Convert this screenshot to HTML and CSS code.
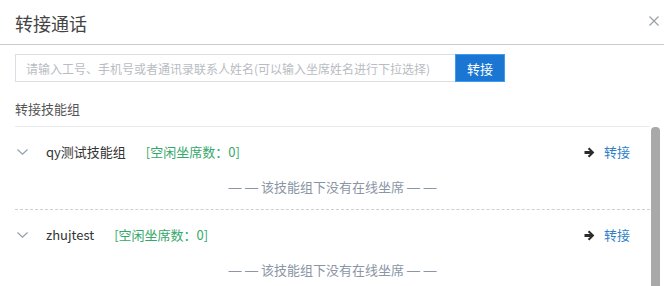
FILE: index.html
```html
<!DOCTYPE html>
<html lang="zh-CN">
<head>
<meta charset="utf-8">
<title>转接通话</title>
<link rel="stylesheet" href="styles.css">
</head>
<body>
<div class="modal">
  <div class="modal-header">
    <span class="modal-title">转接通话</span>
    <svg class="close" width="10" height="10" viewBox="0 0 10 10"><path d="M0.5 0.5L9.5 9.5M9.5 0.5L0.5 9.5" stroke="#9aa0a8" stroke-width="1.2" fill="none"/></svg>
  </div>
  <div class="modal-body">
    <div class="search-row">
      <input class="search-input" type="text" placeholder="请输入工号、手机号或者通讯录联系人姓名(可以输入坐席姓名进行下拉选择)">
      <button class="btn-primary">转接</button>
    </div>
    <div class="section-label">转接技能组</div>
    <div class="list-wrap">
      <div class="group-list">
        <div class="group">
          <div class="group-row">
            <svg class="chevron" width="11" height="6" viewBox="0 0 11 6"><path d="M0.5 0.5L5.5 5.2L10.5 0.5" stroke="#8e9db1" stroke-width="1.1" fill="none"/></svg>
            <span class="group-name">qy测试技能组</span>
            <span class="idle">[空闲坐席数：0]</span>
            <span class="spacer"></span>
            <svg class="arrow" width="11" height="11" viewBox="0 0 11 11"><path d="M0.5 4.1H6L3.8 1.9L5.3 0.4L10.4 5.5L5.3 10.6L3.8 9.1L6 6.9H0.5Z" fill="#2b2b2b"/></svg>
            <a class="transfer-link">转接</a>
          </div>
          <div class="empty"><span class="dash">— —</span> 该技能组下没有在线坐席 <span class="dash">— —</span></div>
        </div>
        <div class="group">
          <div class="group-row">
            <svg class="chevron" width="11" height="6" viewBox="0 0 11 6"><path d="M0.5 0.5L5.5 5.2L10.5 0.5" stroke="#8e9db1" stroke-width="1.1" fill="none"/></svg>
            <span class="group-name">zhujtest</span>
            <span class="idle">[空闲坐席数：0]</span>
            <span class="spacer"></span>
            <svg class="arrow" width="11" height="11" viewBox="0 0 11 11"><path d="M0.5 4.1H6L3.8 1.9L5.3 0.4L10.4 5.5L5.3 10.6L3.8 9.1L6 6.9H0.5Z" fill="#2b2b2b"/></svg>
            <a class="transfer-link">转接</a>
          </div>
          <div class="empty"><span class="dash">— —</span> 该技能组下没有在线坐席 <span class="dash">— —</span></div>
        </div>
      </div>
      <div class="scroll-rail"><div class="scroll-thumb"></div></div>
    </div>
  </div>
</div>
</body>
</html>
```
FILE: styles.css
```css
html, body {
  margin: 0;
  padding: 0;
  height: 286px;
  overflow: hidden;
  background: #fff;
}
body {
  font-family: "Noto Sans CJK SC", "Noto Sans", sans-serif;
  font-size: 13px;
  color: #333;
}
.modal-header {
  height: 44px;
  border-bottom: 1px solid #cccccc;
  display: flex;
  align-items: center;
  padding: 0 5px 0 15px;
}
.modal-title {
  font-size: 18px;
  line-height: 24px;
  color: #444;
  flex: 1;
  padding-top: 2px;
}
.close {
  display: block;
  margin-top: -3px;
}
.modal-body {
  padding: 9px 4px 0 15px;
}
.search-row {
  display: flex;
  height: 28px;
}
.search-input {
  box-sizing: border-box;
  width: 440px;
  height: 28px;
  border: 1px solid #dcdee3;
  border-right: none;
  padding: 0 10px;
  font-family: inherit;
  font-size: 12px;
  outline: none;
}
.search-input::placeholder {
  color: #b9bcc2;
}
.btn-primary {
  box-sizing: border-box;
  width: 50px;
  height: 28px;
  background: #1a76d2;
  border: 1px solid #3f9bf0;
  color: #fff;
  font-family: inherit;
  font-size: 13px;
  padding: 0;
}
.section-label {
  margin-top: 17px;
  line-height: 20px;
  padding-bottom: 7px;
  color: #555;
  border-bottom: 1px solid #e8e9ee;
  margin-right: 10px;
}
.list-wrap {
  display: flex;
  height: 200px;
}
.group-list {
  flex: 1;
}
.scroll-rail {
  width: 10px;
  padding-left: 1px;
  box-sizing: border-box;
}
.scroll-thumb {
  height: 190px;
  background: #a9a9a9;
  border-radius: 4px;
}
.group {
  border-bottom: 1px dashed #cfcfcf;
  padding-bottom: 11px;
}
.group-row {
  height: 50px;
  display: flex;
  align-items: center;
  padding: 0 20px 0 2px;
}
.chevron {
  display: block;
  margin-right: 18px;
}
.group-name {
  color: #333;
  line-height: 20px;
}
.idle {
  color: #35a86b;
  margin-left: 20px;
  line-height: 20px;
}
.spacer {
  flex: 1;
}
.arrow {
  display: block;
  margin-right: 9px;
}
.transfer-link {
  color: #2f7fc6;
  line-height: 20px;
}
.empty {
  text-align: center;
  color: #8a95a5;
  line-height: 20px;
}
.dash {
  font-family: "Liberation Sans", sans-serif;
}
```
